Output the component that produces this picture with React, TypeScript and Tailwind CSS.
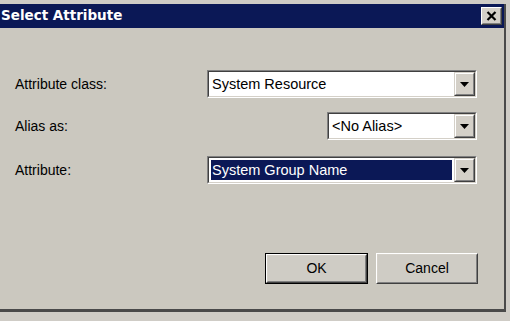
import React from "react";

const F = { fontFamily: '"Liberation Sans", Arial, sans-serif' } as const;

function Arrow() {
  return (
    <svg width="9" height="5" viewBox="0 0 9 5" className="block">
      <path d="M0 0 H9 L4.5 5 Z" fill="#000" />
    </svg>
  );
}

function DropButton() {
  return (
    <div className="h-full w-[21px] border-t border-l border-b border-r border-t-[#d4d0c8] border-l-[#d4d0c8] border-b-[#404040] border-r-[#404040]">
      <div className="h-full w-full border border-t-white border-l-white border-b-[#808080] border-r-[#808080] bg-[#d4d0c8] flex items-center justify-center">
        <Arrow />
      </div>
    </div>
  );
}

function Combo({ text, selected, width }: { text: string; selected?: boolean; width: string }) {
  return (
    <div className={`${width} h-[28px] border border-t-[#808080] border-l-[#808080] border-b-white border-r-white`}>
      <div className="h-full w-full border border-t-[#404040] border-l-[#404040] border-b-[#d4d0c8] border-r-[#d4d0c8] bg-white flex">
        <div className="flex-1 flex items-stretch p-[2px] min-w-0">
          <div
            className={`flex-1 flex items-center pl-[1px] text-[14.5px] leading-none ${
              selected ? "bg-[#0b1856] text-white" : "text-black"
            }`}
            style={F}
          >
            {text}
          </div>
        </div>
        <DropButton />
      </div>
    </div>
  );
}

function Button({ label, isDefault }: { label: string; isDefault?: boolean }) {
  const inner = (
    <div className="h-full w-full border border-t-white border-l-white border-b-[#404040] border-r-[#404040]">
      <div className="h-full w-full border border-t-[#d4d0c8] border-l-[#d4d0c8] border-b-[#808080] border-r-[#808080] bg-[#cfccc5] flex items-center justify-center text-[14px] text-black" style={F}>
        {label}
      </div>
    </div>
  );
  return isDefault ? (
    <div className="w-[103px] h-[31px] border border-black">{inner}</div>
  ) : (
    <div className="w-[102px] h-[31px]">{inner}</div>
  );
}

export default function App() {
  return (
    <div className="w-[510px] h-[321px] bg-[#cfccc6] pt-[4px] pr-[4px] pb-[9px] overflow-hidden">
      <div className="w-full h-full flex flex-col border-r-[2px] border-b-[3px] border-[#4a4a4a] bg-[#cbc8bf]">
        <div className="h-[24px] bg-[#0b1856] flex items-center justify-between pr-[2px]">
          <span
            className="text-white font-bold text-[13.5px] leading-none pl-[1px]"
            style={{ fontFamily: '"DejaVu Sans", Tahoma, sans-serif' }}
          >
            Select Attribute
          </span>
          <div className="w-[21px] h-[18px] border border-t-white border-l-white border-b-[#404040] border-r-[#404040]">
            <div className="w-full h-full border border-t-[#d4d0c8] border-l-[#d4d0c8] border-b-[#808080] border-r-[#808080] bg-[#d4d0c8] flex items-center justify-center">
              <svg width="11" height="10" viewBox="0 0 11 10">
                <path d="M1.5 1 L9.5 9 M9.5 1 L1.5 9" stroke="#000" strokeWidth="2.2" />
              </svg>
            </div>
          </div>
        </div>
        <div className="flex-1 flex flex-col pt-[42px] pl-[15px]">
          <div className="flex items-center h-[28px]">
            <div className="w-[192px] text-[14px] text-black" style={F}>Attribute class:</div>
            <Combo text="System Resource" width="w-[270px]" />
          </div>
          <div className="flex items-center h-[28px] mt-[14px]">
            <div className="w-[312px] text-[14px] text-black" style={F}>Alias as:</div>
            <Combo text="<No Alias>" width="w-[150px]" />
          </div>
          <div className="flex items-center h-[28px] mt-[16px]">
            <div className="w-[192px] text-[14px] text-black" style={F}>Attribute:</div>
            <Combo text="System Group Name" selected width="w-[270px]" />
          </div>
          <div className="flex gap-[8px] mt-[69px] pl-[250px]">
            <Button label="OK" isDefault />
            <Button label="Cancel" />
          </div>
        </div>
      </div>
    </div>
  );
}
